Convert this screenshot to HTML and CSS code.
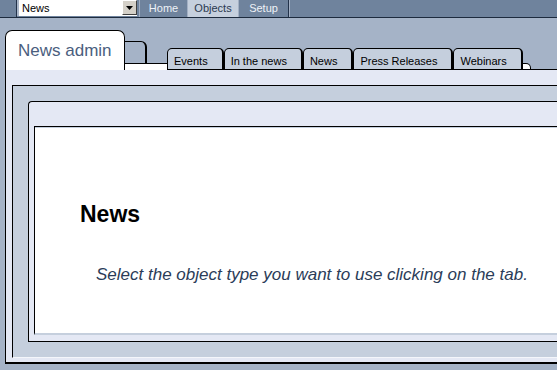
FILE: index.html
```html
<!DOCTYPE html>
<html>
<head>
<meta charset="utf-8">
<link rel="stylesheet" href="styles.css">
</head>
<body>
<div class="page">
  <div class="topbar">
    <div class="tb-lead"></div>
    <div class="tb-select">
      <span class="sel-text">News</span>
      <span class="sel-btn"><svg width="7" height="4" viewBox="0 0 7 4"><path d="M0 0H7L3.5 4Z" fill="#000"/></svg></span>
    </div>
    <nav class="tb-nav">
      <a class="tb-btn tb-home">Home</a>
      <a class="tb-btn tb-objects active">Objects</a>
      <a class="tb-btn tb-setup">Setup</a>
    </nav>
  </div>

  <div class="tabs-row">
    <div class="main-tab">News admin</div>
    <div class="filler">
      <div class="ghost"></div>
      <div class="strip"></div>
    </div>
    <div class="subtab">Events</div>
    <div class="subtab">In the news</div>
    <div class="subtab">News</div>
    <div class="subtab">Press Releases</div>
    <div class="subtab">Webinars</div>
    <div class="end-piece"></div>
    <div class="tab-rest"></div>
  </div>

  <div class="panel">
    <div class="frame">
      <div class="card">
        <div class="content">
          <h1 class="title">News</h1>
          <p class="hint">Select the object type you want to use clicking on the tab.</p>
        </div>
      </div>
    </div>
  </div>
</div>
</body>
</html>
```

FILE: styles.css
```css
html, body {
  margin: 0;
  padding: 0;
  overflow: hidden;
  background: #a5b3c7;
  font-family: "Liberation Sans", Arial, sans-serif;
}

.page {
  width: 557px;
  height: 370px;
  overflow: hidden;
}

/* top bar */
.topbar {
  display: flex;
  height: 17px;
  background: #6f839d;
  border-bottom: 1px solid #1d2b3e;
}

.tb-lead {
  width: 16px;
  border-right: 1px solid #22324a;
}

.tb-select {
  display: flex;
  width: 118px;
  height: 16px;
  border-left: 2px solid #aab6c8;
  background: #fff;
}

.sel-text {
  flex: 1;
  font-size: 11px;
  line-height: 16px;
  padding-left: 3px;
  color: #000;
}

.sel-btn {
  width: 13px;
  height: 13px;
  background: #d4d0c8;
  border: 1px solid;
  border-color: #ffffff #404040 #404040 #ffffff;
  display: flex;
  align-items: center;
  justify-content: center;
}

.tb-nav {
  display: flex;
  margin-left: 2px;
}

.tb-btn {
  display: block;
  border-left: 1px solid #a3b0c4;
  font-size: 11px;
  line-height: 17px;
  text-align: center;
  color: #eef2f7;
}

.tb-home { width: 47px; }
.tb-objects { width: 50px; }
.tb-setup {
  width: 49px;
  border-right: 1px solid #22324a;
  box-shadow: 1px 0 0 #a3b0c4;
}

.tb-btn.active {
  background: #c6d0de;
  color: #2b3a50;
}

/* tabs */
.tabs-row {
  display: flex;
  align-items: flex-end;
  margin-top: 12px;
  padding-left: 5px;
  height: 40px;
}

.main-tab {
  box-sizing: border-box;
  flex: none;
  width: 120px;
  height: 40px;
  background: #fff;
  border: 1px solid #000;
  border-bottom: none;
  border-radius: 7px 7px 0 0;
  padding: 10px 0 0 12px;
  font-size: 17px;
  line-height: 20px;
  color: #4a5e7e;
}

.filler {
  display: flex;
  flex: none;
  flex-direction: column;
  width: 42px;
}

.ghost {
  box-sizing: border-box;
  width: 22px;
  height: 22px;
  border-top: 1px solid #000;
  border-right: 2px solid #000;
  border-radius: 0 6px 0 0;
}

.strip {
  box-sizing: border-box;
  height: 7px;
  background: #fff;
  border-top: 1px solid #000;
}

.subtab {
  box-sizing: border-box;
  flex: none;
  height: 22px;
  background: #c5cfdd;
  border-top: 1px solid #000;
  border-left: 1px solid #000;
  border-right: 2px solid #000;
  border-bottom: 1px solid #000;
  border-radius: 5px 5px 0 0;
  padding: 6px 14px 0 6px;
  font-size: 11px;
  line-height: 13px;
  color: #000;
  white-space: nowrap;
}

.end-piece {
  box-sizing: border-box;
  flex: none;
  width: 8px;
  height: 7px;
  background: #fff;
  border-top: 1px solid #000;
  border-right: 1px solid #000;
  border-bottom: 1px solid #000;
  border-radius: 0 5px 0 0;
}

.tab-rest {
  flex: 1;
  height: 1px;
  background: #000;
}

/* panel */
.panel {
  margin-left: 5px;
  margin-right: -80px;
  background: #e4e8f4;
  border-left: 1px solid #000;
  border-bottom: 2px solid #000;
  padding: 15px 0 4px 6px;
}

.frame {
  background: #c5cfdd;
  border-top: 1px solid #000;
  border-left: 1px solid #000;
  border-bottom: 1px solid #f4f6fb;
  padding: 15px 0 15px 15px;
}

.card {
  background: #e4e8f4;
  border-top: 1px solid #000;
  border-left: 1px solid #000;
  border-bottom: 1px solid #000;
  border-radius: 4px 0 0 0;
  padding: 24px 0 6px 5px;
}

.content {
  box-sizing: border-box;
  height: 209px;
  background: #fff;
  border-top: 1px solid #000;
  border-left: 1px solid #000;
  border-bottom: 2px solid #c5cfdd;
  box-shadow: inset 0 1px 0 #c5cfdd;
  padding: 74px 0 0 45px;
}

.title {
  margin: 0;
  font-size: 23px;
  font-weight: bold;
  line-height: 26px;
  color: #000;
}

.hint {
  margin: 38px 0 0 16px;
  font-size: 17px;
  font-style: italic;
  line-height: 20px;
  color: #2b3c58;
  white-space: nowrap;
}
```
